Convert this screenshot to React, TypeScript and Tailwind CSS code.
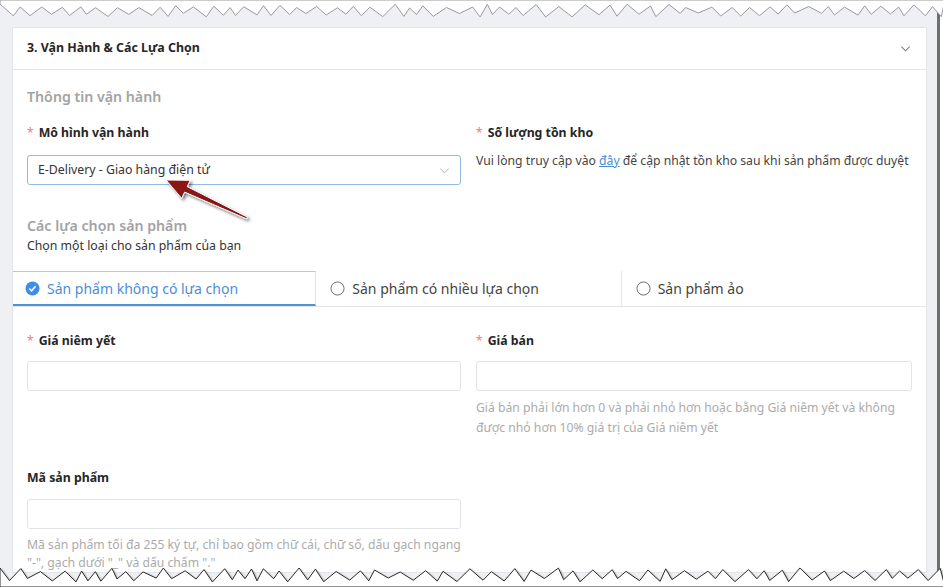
import React from "react";

const FONT = { fontFamily: '"Noto Sans", "Open Sans", Arial, sans-serif' };

function rng(seed: number) {
  let s = seed;
  return () => {
    s = (s * 16807) % 2147483647;
    return (s - 1) / 2147483646;
  };
}

function zigzag(seed: number, yTop: number, yBottom: number) {
  const r = rng(seed);
  const pts: string[] = [];
  let x = 0;
  let up = true;
  while (x <= 945) {
    const y = up ? yTop + r() * 4 : yBottom - r() * 4;
    pts.push(`${x.toFixed(1)},${y.toFixed(1)}`);
    x += 5 + r() * 9;
    up = !up;
  }
  return pts;
}

function TornEdges() {
  const top = zigzag(7, 4, 17);
  const bottom = zigzag(19, 568, 582);
  const topPoly = ["0,0", ...top, "945,0"].join(" ");
  const bottomPoly = ["0,587", ...bottom, "945,587"].join(" ");
  return (
    <svg className="pointer-events-none absolute inset-0" width="943" height="587" viewBox="0 0 943 587">
      <defs>
        <filter id="sh" x="-10%" y="-10%" width="120%" height="130%">
          <feDropShadow dx="1" dy="1.5" stdDeviation="1" floodColor="#000" floodOpacity="0.45" />
        </filter>
        <filter id="ash" x="-20%" y="-20%" width="150%" height="150%">
          <feDropShadow dx="2" dy="2" stdDeviation="1.5" floodColor="#000" floodOpacity="0.5" />
        </filter>
      </defs>
      <polygon points={topPoly} fill="#fff" stroke="#9a9a9a" strokeWidth="1" />
      <polygon points={bottomPoly} fill="#fff" stroke="#2b2b2b" strokeWidth="1" filter="url(#sh)" />
      {/* callout arrow */}
      <polygon
        points="166,180 190.2,180.3 187.2,186.6 247.4,217.1 246.6,218.9 184.6,192.1 181.7,198.4"
        fill="#8a1414"
        stroke="#fff"
        strokeWidth="1"
        strokeLinejoin="round"
        filter="url(#ash)"
      />
    </svg>
  );
}

function Chevron({ color, size = 11 }: { color: string; size?: number }) {
  return (
    <svg width={size} height={size} viewBox="0 0 12 12" fill="none">
      <path d="M1.5 4 L6 8.5 L10.5 4" stroke={color} strokeWidth="1.1" />
    </svg>
  );
}

function Label({ text, required }: { text: string; required?: boolean }) {
  return (
    <div className="flex h-[18px] items-center text-[12.3px] font-bold leading-[18px] text-[#262626]">
      {required && <span className="mr-[5px] text-[12px] font-normal text-[#f07a7a]">*</span>}
      {text}
    </div>
  );
}

function Input() {
  return <div className="h-[30px] w-full rounded-[3px] border border-[#e1e3e6] bg-white" />;
}

export default function App() {
  const tabs = ["Sản phẩm không có lựa chọn", "Sản phẩm có nhiều lựa chọn", "Sản phẩm ảo"];
  return (
    <div className="relative h-[587px] w-[943px] overflow-hidden bg-white" style={FONT}>
      <div className="h-[587px] w-[940px] border-r-[3px] border-[#6f6f6f] bg-[#eff0f3] pl-[12px] pr-[10px] pt-[27px]">
        <div className="w-[915px] border border-[#e3e5e9] bg-white">
          {/* header */}
          <div className="flex h-[42px] items-center justify-between border-b border-[#e3e5e9] pl-[14px] pr-[15px]">
            <span className="text-[12.4px] font-bold text-[#262626]">3. Vận Hành &amp; Các Lựa Chọn</span>
            <Chevron color="#777" />
          </div>

          <div className="px-[14px] pt-[17px]">
            <div className="text-[14.2px] font-semibold leading-[20px] text-[#a3a3a3]">Thông tin vận hành</div>
            <div className="mt-[17px] flex gap-[15px]">
              <div className="w-[434px]">
                <Label text="Mô hình vận hành" required />
                <div className="mt-[13px] flex h-[30px] items-center justify-between rounded-[3px] border border-[#8fbbe6] pl-[10px] pr-[10px] text-[12.3px] text-[#333]">
                  <span>E-Delivery - Giao hàng điện tử</span>
                  <Chevron color="#c4c4c4" />
                </div>
              </div>
              <div className="flex-1">
                <Label text="Số lượng tồn kho" required />
                <div className="mt-[10px] whitespace-nowrap text-[12.2px] leading-[18px] text-[#444]">
                  Vui lòng truy cập vào <span className="text-[#4a8fd6] underline">đây</span> để cập nhật tồn kho sau khi sản phẩm được duyệt
                </div>
              </div>
            </div>
            <div className="mt-[31px] text-[14.2px] font-semibold leading-[20px] text-[#a3a3a3]">Các lựa chọn sản phẩm</div>
            <div className="mt-[1px] text-[12.3px] leading-[18px] text-[#333]">Chọn một loại cho sản phẩm của bạn</div>
          </div>

          {/* tabs */}
          <div className="mt-[16px] flex h-[36px] border-b border-[#e3e5e9]">
            {tabs.map((t, i) => {
              const active = i === 0;
              return (
                <div
                  key={t}
                  className={
                    active
                      ? "flex flex-1 items-center gap-[7px] border-r border-t border-b-2 border-r-[#e3e5e9] border-t-[#a9cbee] border-b-[#4e92db] pl-[12px] text-[14px] text-[#4a8fd6]"
                      : "flex flex-1 items-center gap-[7px] border-r border-[#e3e5e9] pl-[14px] text-[14px] text-[#444] last:border-r-0"
                  }
                >
                  {active ? (
                    <svg width="15" height="15" viewBox="0 0 16 16">
                      <circle cx="8" cy="8" r="7.5" fill="#3d8ee8" />
                      <path d="M4.6 8.2 L7 10.5 L11.3 5.6" stroke="#fff" strokeWidth="1.7" fill="none" />
                    </svg>
                  ) : (
                    <svg width="15" height="15" viewBox="0 0 16 16">
                      <circle cx="8" cy="8" r="7" fill="#fff" stroke="#666" strokeWidth="1" />
                    </svg>
                  )}
                  <span>{t}</span>
                </div>
              );
            })}
          </div>

          <div className="px-[14px] pt-[25px]">
            <div className="flex gap-[15px]">
              <div className="w-[434px]">
                <Label text="Giá niêm yết" required />
                <div className="mt-[11px]">
                  <Input />
                </div>
              </div>
              <div className="flex-1">
                <Label text="Giá bán" required />
                <div className="mt-[11px]">
                  <Input />
                </div>
                <div className="mt-[7px] text-[12.2px] leading-[20px] text-[#ababab]">
                  Giá bán phải lớn hơn 0 và phải nhỏ hơn hoặc bằng Giá niêm yết và không được nhỏ hơn 10% giá trị của Giá niêm yết
                </div>
              </div>
            </div>
            <div className="mt-[31px] w-[434px]">
              <Label text="Mã sản phẩm" />
              <div className="mt-[12px]">
                <Input />
              </div>
              <div className="mt-[7px] text-[12.2px] leading-[18px] text-[#ababab]">
                Mã sản phẩm tối đa 255 ký tự, chỉ bao gồm chữ cái, chữ số, dấu gạch ngang "-", gạch dưới "_" và dấu chấm "."
              </div>
            </div>
          </div>
        </div>
      </div>
      <TornEdges />
    </div>
  );
}
